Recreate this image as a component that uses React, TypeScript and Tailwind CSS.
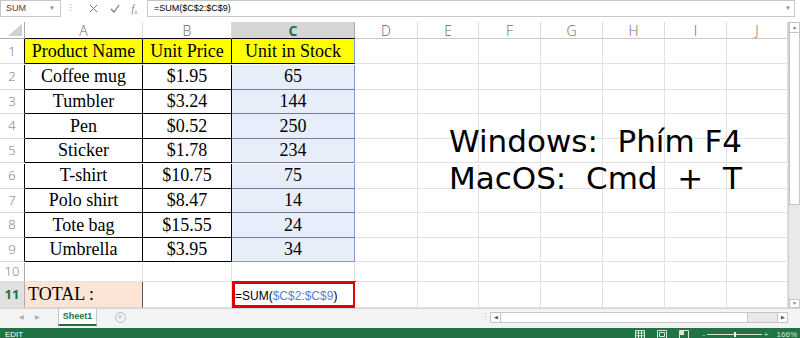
import React from 'react';

const cols = ['A', 'B', 'C', 'D', 'E', 'F', 'G', 'H', 'I', 'J'];

const table: string[][] = [
  ['Product Name', 'Unit Price', 'Unit in Stock'],
  ['Coffee mug', '$1.95', '65'],
  ['Tumbler', '$3.24', '144'],
  ['Pen', '$0.52', '250'],
  ['Sticker', '$1.78', '234'],
  ['T-shirt', '$10.75', '75'],
  ['Polo shirt', '$8.47', '14'],
  ['Tote bag', '$15.55', '24'],
  ['Umbrella', '$3.95', '34'],
];

function colHeaderClass(i: number) {
  if (i === 2) return 'bg-[#d6d6d6] text-[#217346] font-bold border-r-[#ababab] border-b-black';
  if (i < 2) return 'bg-white text-[#666] border-r-[#dadada] border-b-black';
  return 'bg-white text-[#666] border-r-[#dadada] border-b-[#c8c8c8]';
}

function rowHeaderClass(r: number) {
  if (r === 11) return 'bg-[#e1e1e1] text-[#217346] font-bold border-r-[#ababab] border-b-[#dadada]';
  if (r <= 9) return 'bg-white text-[#777] border-r-black border-b-[#dadada]';
  return 'bg-white text-[#777] border-r-[#ababab] border-b-[#dadada]';
}

function cellClass(r: number, c: number) {
  if (r === 1 && c < 2) return 'bg-[#ffff00] border-black';
  if (r === 1 && c === 2) return 'bg-[#ffff00] border-b-black border-r-[#7f9bd0]';
  if (r <= 9 && c < 2) return 'bg-white border-black';
  if (r === 9 && c === 2) return 'bg-[#e8eef9] border-[#7f9bd0]';
  if (r <= 9 && c === 2) return 'bg-[#e8eef9] border-b-[#717d8f] border-r-[#7f9bd0]';
  if (r === 11 && c === 0) return 'bg-[#fce4d6] border-r-[#555] border-b-[#dadada] justify-start pl-[3px]';
  return 'bg-white border-[#e1e1e1]';
}

function FormulaBar() {
  return (
    <div className="h-[22px] bg-white flex items-start text-[9px] text-[#444]" style={{ fontFamily: '"Liberation Sans", Arial, sans-serif' }}>
      <div className="w-[61px] h-[17px] border border-[#c6c6c6] flex items-center justify-between px-[5px]">
        <span>SUM</span>
        <span className="text-[6px] text-[#888]">▼</span>
      </div>
      <div className="w-[18px] h-[17px] flex items-center justify-center text-[#aaa]">⋮</div>
      <div className="w-[68px] h-[17px] flex items-center justify-around px-1 text-[#777]">
        <svg width="9" height="9" viewBox="0 0 9 9"><path d="M1 1 L8 8 M8 1 L1 8" stroke="#777" strokeWidth="1" /></svg>
        <svg width="10" height="9" viewBox="0 0 10 9"><path d="M1 5 L4 8 L9 1" stroke="#777" strokeWidth="1.2" fill="none" /></svg>
        <span className="italic text-[10px]" style={{ fontFamily: '"Liberation Serif", serif' }}>f<sub className="text-[6px]">x</sub></span>
      </div>
      <div className="flex-1 h-[17px] border border-[#c6c6c6] flex items-center justify-between pl-[6px] pr-[3px] mr-[5px] text-black">
        <span>=SUM($C$2:$C$9)</span>
        <span className="text-[6px] text-[#888]">▼</span>
      </div>
    </div>
  );
}

function Grid() {
  const heights = ['h-[17px]', 'h-[25px]', 'h-[25px]', 'h-[24px]', 'h-[25px]', 'h-[24px]', 'h-[25px]', 'h-[24px]', 'h-[25px]', 'h-[24px]', 'h-[19px]', 'h-[26px]'];
  return (
    <div className="grid grid-cols-[25px_118px_89px_123px_63px_61px_62px_62px_62px_62px_61px] w-[788px]">
      {/* header row */}
      <div className={`${heights[0]} border-r border-b border-r-[#ababab] border-b-[#ababab] bg-white flex items-end justify-end pr-[2px] pb-[2px]`}>
        <svg width="14" height="12" viewBox="0 0 14 12"><path d="M14 0 L14 12 L0 12 Z" fill="#d0d0d0" /></svg>
      </div>
      {cols.map((c, i) => (
        <div key={c} className={`${heights[0]} border-r border-b flex items-center justify-center text-[14px] ${colHeaderClass(i)}`} style={{ fontFamily: '"Open Sans", sans-serif', fontWeight: i === 2 ? 700 : 300 }}>
          {c}
        </div>
      ))}
      {Array.from({ length: 11 }, (_, k) => k + 1).map((r) => (
        <React.Fragment key={r}>
          <div className={`${heights[r]} border-r border-b flex items-center justify-center text-[13px] ${rowHeaderClass(r)}`} style={{ fontFamily: '"Open Sans", sans-serif', fontWeight: r === 11 ? 700 : 300 }}>
            {r}
          </div>
          {cols.map((c, i) => {
            let content: React.ReactNode = null;
            if (r <= 9 && i < 3) content = table[r - 1][i];
            if (r === 11 && i === 0) content = 'TOTAL :';
            if (r === 11 && i === 2) {
              content = (
                <>
                  <div className="absolute left-0 top-[-1px] right-[-2px] bottom-[-1px] border-[3px] border-[#e30000]" />
                  <span className="text-[12px] pl-[3px] pt-[4px] self-center" style={{ fontFamily: '"Liberation Sans", Arial, sans-serif' }}>
                    =SUM(<span className="text-[#5b80d6]">$C$2:$C$9</span>)
                  </span>
                </>
              );
            }
            return (
              <div
                key={c}
                className={`${heights[r]} relative border-r border-b flex items-center ${r === 11 && i === 2 ? 'justify-start' : 'justify-center'} text-[18px] text-black ${cellClass(r, i)}`}
                style={{ fontFamily: '"Liberation Serif", "Times New Roman", serif' }}
              >
                {content}
              </div>
            );
          })}
        </React.Fragment>
      ))}
    </div>
  );
}

function VScroll() {
  return (
    <div className="w-[12px] flex flex-col bg-[#e9e9e9] border-l border-[#d0d0d0]">
      <div className="h-[11px] bg-white border border-[#c6c6c6] flex items-center justify-center text-[5px] text-[#777]">▲</div>
      <div className="h-[172px] bg-white border-x border-b border-[#c6c6c6]" />
      <div className="flex-1" />
      <div className="h-[9px] bg-white border border-[#c6c6c6] flex items-center justify-center text-[5px] text-[#777]">▼</div>
    </div>
  );
}

function TabBar() {
  return (
    <div className="h-[20px] bg-[#f3f3f3] border-t border-[#d4d4d4] flex items-start text-[9px]" style={{ fontFamily: '"Liberation Sans", Arial, sans-serif' }}>
      <div className="w-[58px] h-[17px] flex items-center justify-center gap-[11px] text-[6px] text-[#aaa]">
        <span>◀</span>
        <span>▶</span>
      </div>
      <div className="w-[39px] h-[17px] bg-white border-x border-[#c6c6c6] border-b-2 border-b-[#217346] flex items-center justify-center font-bold text-[#217346]">Sheet1</div>
      <div className="w-[46px] h-[17px] flex items-center justify-center">
        <div className="w-[11px] h-[11px] rounded-full border border-[#bbb] flex items-center justify-center text-[9px] leading-none text-[#aaa]">+</div>
      </div>
      <div className="w-[337px]" />
      <div className="w-[10px] h-[17px] flex items-center justify-center text-[#bbb]">⋮</div>
      <div className="w-[298px] h-[11px] mt-[3px] flex border border-[#c6c6c6] bg-[#e9e9e9]">
        <div className="w-[10px] bg-white border-r border-[#c6c6c6] flex items-center justify-center text-[5px] text-[#555]">◀</div>
        <div className="w-[247px] bg-white border-r border-[#c6c6c6]" />
        <div className="flex-1" />
        <div className="w-[10px] bg-white border-l border-[#c6c6c6] flex items-center justify-center text-[5px] text-[#555]">▶</div>
      </div>
    </div>
  );
}

function StatusBar() {
  return (
    <div className="h-[13px] bg-[#217346] flex items-center text-[8px] text-white" style={{ fontFamily: '"Liberation Sans", Arial, sans-serif' }}>
      <span className="pl-[5px]">EDIT</span>
      <div className="flex-1" />
      <div className="flex items-center gap-[12px] mr-[14px]">
        <svg width="10" height="9" viewBox="0 0 10 9"><path d="M0.5 0.5h9v8h-9z M0.5 3h9 M0.5 5.8h9 M3.5 0.5v8 M6.5 0.5v8" stroke="#d8e8dc" fill="none" strokeWidth="1" /></svg>
        <svg width="10" height="9" viewBox="0 0 10 9"><path d="M0.5 0.5h9v8h-9z M2.5 2.5h5v4h-5z" stroke="#d8e8dc" fill="none" strokeWidth="1" /></svg>
        <svg width="10" height="9" viewBox="0 0 10 9"><path d="M0.5 0.5h9v8h-9z" stroke="#d8e8dc" fill="none" strokeWidth="1" /><path d="M1 1h4v4h-4z" fill="#d8e8dc" /></svg>
      </div>
      <div className="relative w-[66px] h-[9px] flex items-center mr-[8px]">
        <span className="text-[8px] leading-none text-[#cfe3d5]">-</span>
        <div className="flex-1 h-px bg-[#cfe3d5] mx-[2px]" />
        <span className="text-[8px] leading-none text-[#cfe3d5]">+</span>
        <div className="absolute left-[31px] top-[2px] w-[2px] h-[5px] bg-[#eef5f0]" />
      </div>
      <span className="pr-[3px] text-[#cfe3d5]">166%</span>
    </div>
  );
}

export default function App() {
  return (
    <div className="relative w-[800px] h-[338px] overflow-hidden bg-white">
      <FormulaBar />
      <div className="flex h-[286px] overflow-hidden">
        <Grid />
        <VScroll />
      </div>
      <TabBar />
      <StatusBar />
      <div
        className="absolute left-[449px] top-[123px] text-[31px] leading-[37px] text-black whitespace-pre"
        style={{ fontFamily: '"DejaVu Sans", sans-serif' }}
      >
        <div>Windows:  Phím F4</div>
        <div>MacOS:  Cmd  +  T</div>
      </div>
    </div>
  );
}
